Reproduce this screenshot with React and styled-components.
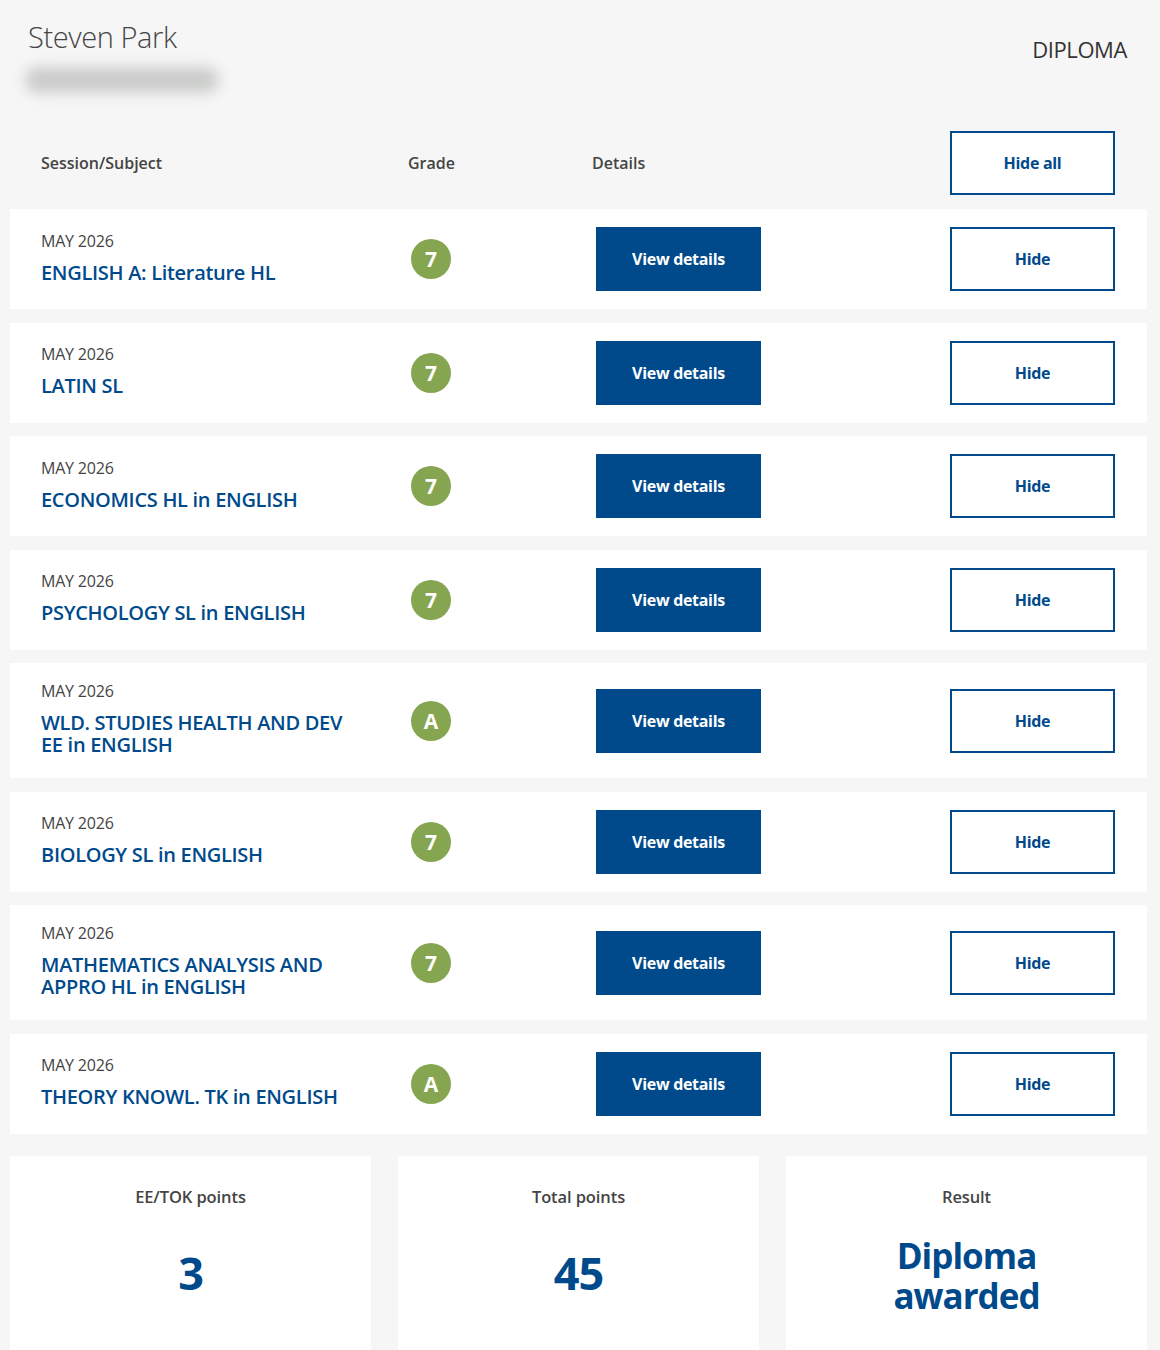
import React from 'react';
import styled, { createGlobalStyle } from 'styled-components';

const GlobalStyle = createGlobalStyle`
  * { box-sizing: border-box; }
  body {
    margin: 0;
    background: #f6f6f6;
    font-family: "Open Sans", "Noto Sans", Arial, sans-serif;
    color: #444;
  }
`;

const BLUE = '#004a8c';
const GREEN = '#86a550';

const Page = styled.div`
  padding: 0 13px 0 10px;
`;

const TopBar = styled.header`
  display: flex;
  justify-content: space-between;
  align-items: flex-start;
  padding: 18px 20px 0 12px;
`;

const Identity = styled.div`
  display: flex;
  flex-direction: column;
`;

const Name = styled.h1`
  margin: 0 0 0 6px;
  font-size: 29px;
  font-weight: 300;
  line-height: 38px;
  color: #444;
  letter-spacing: -0.4px;
`;

const Redacted = styled.div`
  width: 194px;
  height: 26px;
  margin: 11px 0 0 3px;
  border-radius: 13px;
  background: #cacccA;
  filter: blur(7px);
`;

const Programme = styled.div`
  margin-top: 18px;
  font-size: 22px;
  line-height: 26px;
  color: #333;
  letter-spacing: -0.4px;
`;

const Grid = styled.div`
  display: grid;
  grid-template-columns: 369px 186px 354px 165px;
  align-items: center;
  padding: 0 32px 0 31px;
`;

const HeaderRow = styled(Grid)`
  margin-top: 38px;
  margin-bottom: 14px;
`;

const ColLabel = styled.div`
  font-size: 16px;
  font-weight: 600;
  color: #444;
  margin-left: ${(p) => p.$shift || 0}px;
`;

const Rows = styled.div`
  display: flex;
  flex-direction: column;
  gap: 13.5px;
`;

const Card = styled(Grid)`
  background: #fff;
  padding-top: 18px;
  padding-bottom: 18px;
`;

const SubjectCell = styled.div`
  padding: 0 0 4px;
`;

const Session = styled.div`
  font-size: 16px;
  line-height: 20px;
  color: #444;
  letter-spacing: -0.2px;
`;

const Subject = styled.div`
  margin-top: 11px;
  max-width: 312px;
  font-size: 20px;
  line-height: 22px;
  font-weight: 650;
  color: ${BLUE};
  letter-spacing: -0.3px;
`;

const Grade = styled.span`
  display: flex;
  align-items: center;
  justify-content: center;
  width: 40px;
  height: 40px;
  margin-left: 1px;
  border-radius: 50%;
  background: ${GREEN};
  color: #fff;
  font-size: 21px;
  font-weight: 700;
`;

const Button = styled.button`
  width: 165px;
  height: 64px;
  font-family: inherit;
  font-size: 16px;
  font-weight: 700;
  letter-spacing: -0.3px;
  cursor: pointer;
  border: 2px solid ${BLUE};
  background: ${(p) => (p.$solid ? BLUE : '#fff')};
  color: ${(p) => (p.$solid ? '#fff' : BLUE)};
`;

const Summary = styled.section`
  display: grid;
  grid-template-columns: repeat(3, 1fr);
  gap: 27px;
  margin-top: 22px;
`;

const Tile = styled.div`
  background: #fff;
  min-height: 230px;
  padding-top: 30px;
  text-align: center;
`;

const TileLabel = styled.div`
  font-size: 16.5px;
  font-weight: 600;
  line-height: 22px;
  color: #444;
  letter-spacing: -0.1px;
`;

const TileValue = styled.div`
  display: flex;
  align-items: center;
  justify-content: center;
  height: 116px;
  margin-top: ${(p) => (p.$small ? 10 : 7)}px;
  font-size: ${(p) => (p.$small ? 35 : 45)}px;
  line-height: ${(p) => (p.$small ? 40 : 48)}px;
  font-weight: 700;
  color: ${BLUE};
  letter-spacing: -1px;
`;

const subjects = [
  { name: 'ENGLISH A: Literature HL', grade: '7' },
  { name: 'LATIN SL', grade: '7' },
  { name: 'ECONOMICS HL in ENGLISH', grade: '7' },
  { name: 'PSYCHOLOGY SL in ENGLISH', grade: '7' },
  { name: 'WLD. STUDIES HEALTH AND DEV EE in ENGLISH', grade: 'A' },
  { name: 'BIOLOGY SL in ENGLISH', grade: '7' },
  { name: 'MATHEMATICS ANALYSIS AND APPRO HL in ENGLISH', grade: '7' },
  { name: 'THEORY KNOWL. TK in ENGLISH', grade: 'A' },
];

const App = () => {
  return (
    <Page>
      <GlobalStyle />
      <TopBar>
        <Identity>
          <Name>Steven Park</Name>
          <Redacted />
        </Identity>
        <Programme>DIPLOMA</Programme>
      </TopBar>

      <HeaderRow>
        <ColLabel>Session/Subject</ColLabel>
        <ColLabel $shift={-2}>Grade</ColLabel>
        <ColLabel $shift={-4}>Details</ColLabel>
        <Button>Hide all</Button>
      </HeaderRow>

      <Rows>
        {subjects.map((s) => (
          <Card key={s.name}>
            <SubjectCell>
              <Session>MAY 2026</Session>
              <Subject>{s.name}</Subject>
            </SubjectCell>
            <div>
              <Grade>{s.grade}</Grade>
            </div>
            <div>
              <Button $solid>View details</Button>
            </div>
            <Button>Hide</Button>
          </Card>
        ))}
      </Rows>

      <Summary>
        <Tile>
          <TileLabel>EE/TOK points</TileLabel>
          <TileValue>3</TileValue>
        </Tile>
        <Tile>
          <TileLabel>Total points</TileLabel>
          <TileValue>45</TileValue>
        </Tile>
        <Tile>
          <TileLabel>Result</TileLabel>
          <TileValue $small>
            Diploma
            <br />
            awarded
          </TileValue>
        </Tile>
      </Summary>
    </Page>
  );
};

export default App;
